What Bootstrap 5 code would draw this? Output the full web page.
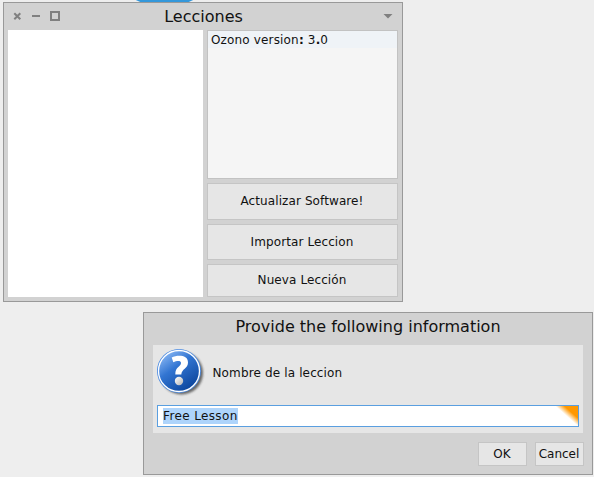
<!DOCTYPE html>
<html lang="es">
<head>
<meta charset="utf-8">
<meta name="viewport" content="width=device-width, initial-scale=1">
<title>Lecciones</title>
<link rel="stylesheet" href="https://cdn.jsdelivr.net/npm/bootstrap@5.3.0/dist/css/bootstrap.min.css">
<style>
body{width:594px;height:477px;background:#eee;font:12px/14px "DejaVu Sans",sans-serif;color:#111}
.win{position:absolute;background:#d2d2d2;border:1px solid #999}
.lessons{left:3px;top:2px;width:400px;height:300px;padding:0 4px 4px}
.dialog-win{left:143px;top:312px;width:450px;height:163px;padding:0 8px 8px 9px}
.behind{position:absolute;left:133px;top:-12px;width:63px;height:17px;border-radius:50%;background:#3498db}
.title{height:27px}
.title-text{font-size:16px;line-height:20px}
.dialog-win .title-text{margin-right:1px}
.title svg{display:block}
.lessons .title-text{padding-left:1px}
.pane{width:195px}
.side{width:191px;gap:4px}
.side .btn,.acts .btn{--bs-btn-padding-x:0;--bs-btn-padding-y:0;--bs-btn-font-size:12px;--bs-btn-line-height:14px;--bs-btn-border-radius:0;--bs-btn-bg:#e6e6e6;--bs-btn-border-color:#c5c5c5;--bs-btn-color:#111}
.side .btn{padding:0 1px 2px 0;letter-spacing:.1px}
.side .b2{padding-bottom:0}
.tree{height:149px;background:#f5f5f5;border:1px solid #c2c2c2}
.tree-row{height:17px;line-height:18px;padding-left:3px;background:#eff3f7;letter-spacing:.16px}
.b1{height:37px}.b2{height:36px}.b3{height:33px}
.panel{width:430px;height:88px;background:#e6e6e6;padding:2px 4px 6px}
.prompt{margin:2px 0 0 5.5px;letter-spacing:.14px}
.entry{width:422px;height:22px;border:1px solid #5a9fe0;background:#fff;padding:2px 0 0 5px;line-height:16px}
.entry .sel{background:#aed4fb;height:16px;color:#111;letter-spacing:.37px}
.corner{right:0;top:0}
.acts{gap:8px;margin-top:9px}
.acts .btn{width:49px;height:24px;padding-right:1px}
</style>
</head>
<body class="position-relative overflow-hidden m-0">
<div class="behind"></div>
<section class="win lessons d-flex flex-column">
  <header class="title d-flex align-items-center position-relative justify-content-center">
    <svg class="position-absolute start-0 top-0" width="60" height="27" fill="none" stroke="#808080" stroke-width="2">
      <path d="M6.300 10.300l6 6M12.300 10.300l-6 6"/><path d="M24 13h8"/><path d="M43 9h8v8h-8z"/>
    </svg>
    <span class="title-text">Lecciones</span>
    <svg class="position-absolute end-0 top-0" width="20" height="27"><path d="M5.500 11h9l-4.500 4.500z" fill="#808080"/></svg>
  </header>
  <div class="d-flex justify-content-between flex-grow-1">
    <div class="pane bg-white"></div>
    <div class="side d-flex flex-column">
      <div class="tree"><div class="tree-row">Ozono version<b>:</b> 3<b>.</b>0</div></div>
      <button class="btn b1">Actualizar Software!</button>
      <button class="btn b2">Importar Leccion</button>
      <button class="btn b3">Nueva Lección</button>
    </div>
  </div>
</section>
<section class="win dialog-win">
  <header class="d-flex justify-content-center pt-1 pb-2"><span class="title-text">Provide the following information</span></header>
  <div class="panel d-flex flex-column justify-content-between">
    <div class="d-flex align-items-center">
      <svg width="50" height="50" viewBox="0 0 50 50">
        <defs>
          <linearGradient id="blue" x1=".15" y1=".05" x2=".8" y2=".95"><stop offset="0" stop-color="#8ab8f4"/><stop offset=".4" stop-color="#3275d2"/><stop offset="1" stop-color="#0b449b"/></linearGradient>
          <linearGradient id="dot" x1="0" y1="0" x2="1" y2="1"><stop offset="0" stop-color="#fff"/><stop offset="1" stop-color="#b4b4b4"/></linearGradient>
          <filter id="soft" x="-20%" y="-20%" width="140%" height="140%"><feGaussianBlur stdDeviation="1.300"/></filter>
        </defs>
        <circle cx="24.500" cy="26" r="21.500" fill="#333" opacity=".7" filter="url(#soft)"/>
        <circle cx="22" cy="24" r="22" fill="#4b8be2"/>
        <circle cx="22" cy="24" r="20.500" fill="url(#blue)" stroke="#fff" stroke-width="1.300"/>
        <path d="M14.700 10.500C20 8 31 7.500 31 15.500c0 6-6.500 6.500-6.700 12h-6c0-8 5.700-7.700 5.700-11.500 0-2.800-4.500-2.300-7.700-.7z" fill="#fff"/>
        <circle cx="22" cy="34" r="4.200" fill="url(#dot)"/>
      </svg>
      <span class="prompt">Nombre de la leccion</span>
    </div>
    <div class="entry d-flex position-relative"><span class="sel">Free Lesson</span>
      <svg class="corner position-absolute" width="22" height="20"><defs><linearGradient id="orange" gradientUnits="userSpaceOnUse" x1="10" y1="9.500" x2="14" y2="5"><stop offset="0" stop-color="#ff9800" stop-opacity="0"/><stop offset="1" stop-color="#ff9800"/></linearGradient></defs><path d="M0 0h22v20H0z" fill="url(#orange)"/></svg>
    </div>
  </div>
  <div class="acts d-flex justify-content-end"><button class="btn">OK</button><button class="btn">Cancel</button></div>
</section>
<script src="https://cdn.jsdelivr.net/npm/bootstrap@5.3.0/dist/js/bootstrap.bundle.min.js"></script>
</body>
</html>
